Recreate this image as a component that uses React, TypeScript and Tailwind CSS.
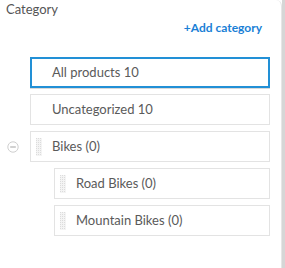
const font = { fontFamily: 'Lato, "Open Sans", sans-serif' }

function Handle() {
  const dots = []
  for (let r = 0; r < 9; r++) {
    for (let c = 0; c < 3; c++) {
      dots.push(<rect key={`${r}-${c}`} x={c * 2} y={r * 2} width="1" height="1" fill="#dcdcdc" />)
    }
  }
  return (
    <svg width="6" height="18" viewBox="0 0 6 18" className="shrink-0">
      <rect x="0" y="0" width="6" height="18" fill="#f4f4f4" />
      {dots}
    </svg>
  )
}

interface RowProps {
  label: string
  active?: boolean
  handle?: boolean
}

function Row({ label, active, handle }: RowProps) {
  return (
    <div
      className={`h-[31px] flex items-center bg-white ${
        active
          ? 'border-2 border-[#2290d6] shadow-[0_1px_0_#d9d9d9]'
          : 'border border-[#e3e3e3]'
      }`}
    >
      {handle ? (
        <div className="flex items-center pl-[5px] gap-[10px]">
          <Handle />
          <span className="text-[13px] text-[#5a5a5a]">{label}</span>
        </div>
      ) : (
        <span className={`${active ? 'pl-[20px]' : 'pl-[21px]'} text-[13px] text-[#5a5a5a]`}>
          {label}
        </span>
      )}
    </div>
  )
}

export default function App() {
  return (
    <div className="w-[285px] h-[268px] flex bg-white" style={font}>
      <div className="w-[282px] border-r border-[#e6e6e6] rounded-tr-[6px] flex flex-col">
        <div className="pl-[6px] pt-[1px] text-[13px] text-[#555] leading-[16px]">Category</div>
        <div className="flex justify-end pr-[19px] pt-[4px]">
          <span className="text-[12px] font-bold text-[#1a7fd6] leading-[14px]">+Add category</span>
        </div>
        <div className="flex flex-col gap-[6px] pl-[30px] pr-[11px] pt-[22px]">
          <Row label="All products 10" active />
          <Row label="Uncategorized 10" />
          <div className="relative">
            <svg
              className="absolute left-[-23px] top-[10px]"
              width="12"
              height="12"
              viewBox="0 0 12 12"
            >
              <circle cx="6" cy="6" r="5.2" fill="none" stroke="#cfcfcf" strokeWidth="1" />
              <line x1="3.2" y1="6" x2="8.8" y2="6" stroke="#bdbdbd" strokeWidth="1.4" />
            </svg>
            <Row label="Bikes (0)" handle />
          </div>
          <div className="flex flex-col gap-[6px] pl-[24px]">
            <Row label="Road Bikes (0)" handle />
            <Row label="Mountain Bikes (0)" handle />
          </div>
        </div>
      </div>
      <div className="w-[3px] bg-[#d6d6d6]" />
    </div>
  )
}
